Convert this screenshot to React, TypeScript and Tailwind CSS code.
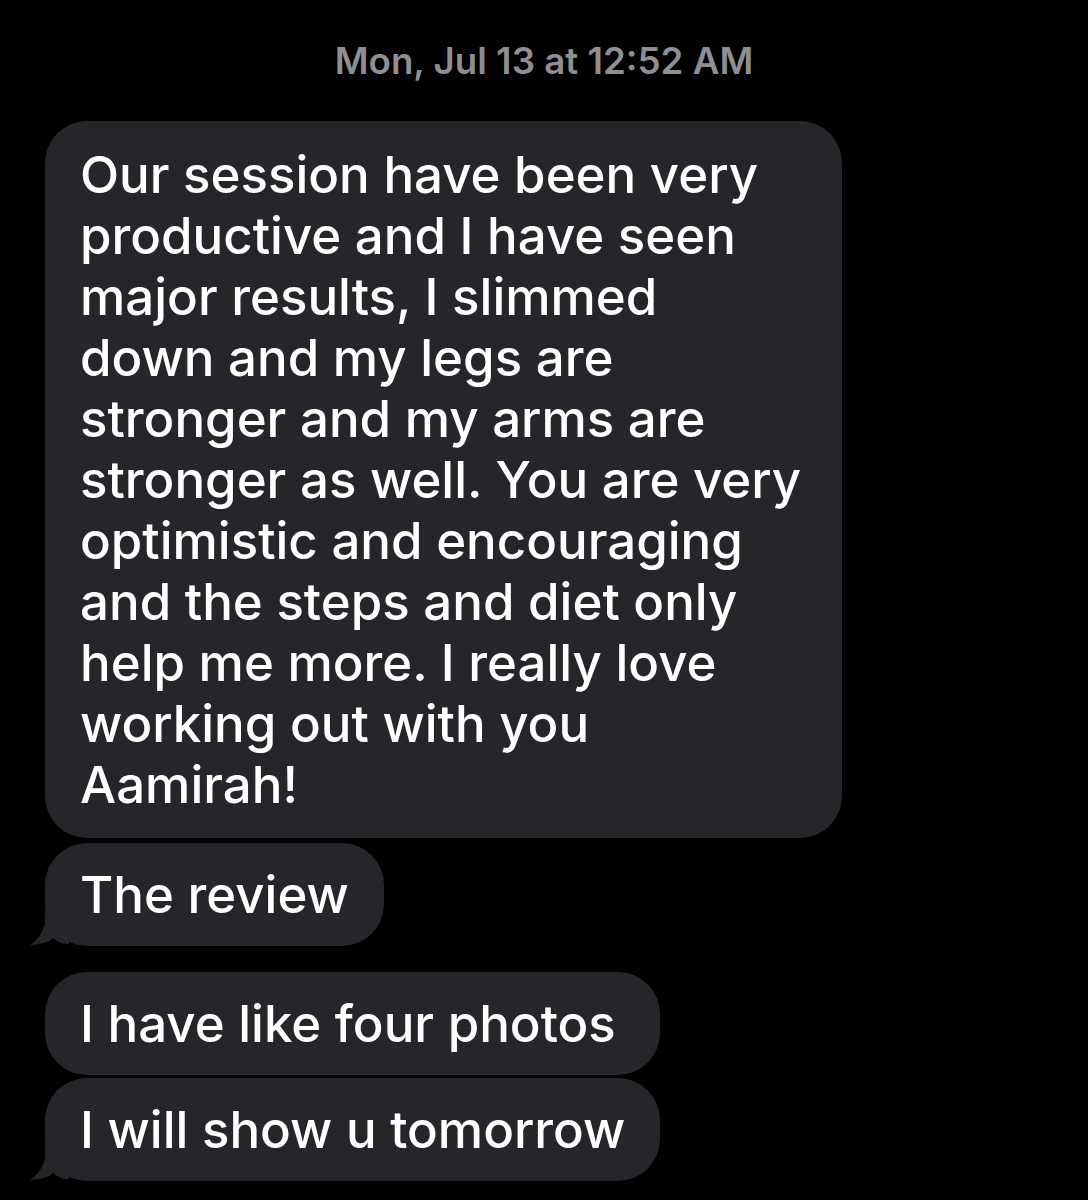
import React from "react";

const Tail = () => (
  <svg
    className="absolute left-[-16px] bottom-0"
    width="40"
    height="36"
    viewBox="0 0 40 36"
  >
    <path
      d="M16 0 L40 0 L40 34 Q30 34 24 28 Q18 34 1 35 Q12 28 16 14 Z"
      fill="#262529"
    />
  </svg>
);

const Bubble = ({
  children,
  tail,
  extra = "pr-[35px]",
}: {
  children: React.ReactNode;
  tail?: boolean;
  extra?: string;
}) => (
  <div className="relative">
    {tail && <Tail />}
    <div
      className={`relative rounded-[42px] bg-[#262529] pl-[35px] ${extra} py-[21px] text-[51px] font-medium leading-[61px] text-white whitespace-nowrap`}
    >
      {children}
    </div>
  </div>
);

const lines = [
  "Our session have been very",
  "productive and I have seen",
  "major results, I slimmed",
  "down and my legs are",
  "stronger and my arms are",
  "stronger as well. You are very",
  "optimistic and encouraging",
  "and the steps and diet only",
  "help me more. I really love",
  "working out with you",
  "Aamirah!",
];

export default function App() {
  return (
    <div
      className="w-[1088px] h-[1200px] bg-black overflow-hidden"
      style={{ fontFamily: "Inter, 'Liberation Sans', sans-serif" }}
    >
      <div className="pt-[39px] text-center text-[36.7px] leading-[44px] font-semibold text-[#8e8e93]">
        Mon, Jul 13 at 12:52 AM
      </div>
      <div className="flex flex-col items-start pl-[45px] pt-[38px]">
        <div className="w-[797px] rounded-[42px] bg-[#262529] px-[35px] py-[23px] text-[51px] font-medium leading-[61px] text-white">
          {lines.map((l, i) => (
            <div key={i} className="whitespace-nowrap">{l}</div>
          ))}
        </div>
        <div className="mt-[5px]">
          <Bubble tail>The review</Bubble>
        </div>
        <div className="mt-[26px]">
          <Bubble extra="pr-[44px]">I have like four photos</Bubble>
        </div>
        <div className="mt-[3px]">
          <Bubble tail>I will show u tomorrow</Bubble>
        </div>
      </div>
    </div>
  );
}
